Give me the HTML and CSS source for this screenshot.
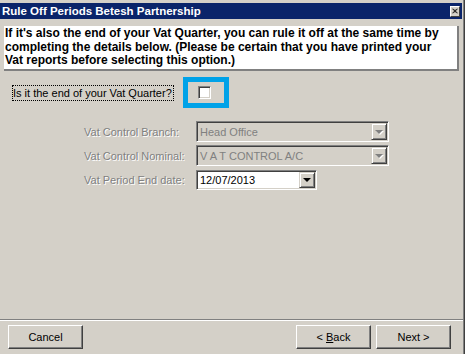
FILE: index.html
```html
<!DOCTYPE html>
<html>
<head>
<meta charset="utf-8">
<title>Rule Off Periods</title>
<link rel="stylesheet" href="styles.css">
</head>
<body>
<div class="window">
  <div class="titlebar">
    <span class="title">Rule Off Periods Betesh Partnership</span>
    <span class="close">
      <svg width="8" height="7" viewBox="0 0 8 7"><path d="M0.5 0.5L6.5 6.5M1.5 0.5L7.5 6.5M6.5 0.5L0.5 6.5M7.5 0.5L1.5 6.5" stroke="#000" stroke-width="1" fill="none"/></svg>
    </span>
  </div>

  <div class="info">If it's also the end of your Vat Quarter, you can rule it off at the same time by<br>completing the details below. (Please be certain that you have printed your<br>Vat reports before selecting this option.)</div>

  <div class="check-row">
    <span class="check-label">Is it the end of your Vat Quarter?</span>
    <span class="highlight"><span class="checkbox"></span></span>
  </div>

  <div class="form">
    <span class="field-label">Vat Control Branch:</span>
    <div class="combo disabled wide"><span class="combo-text">Head Office</span><span class="drop"><span class="arrow"></span></span></div>

    <span class="field-label">Vat Control Nominal:</span>
    <div class="combo disabled wide"><span class="combo-text">V A T CONTROL A/C</span><span class="drop"><span class="arrow"></span></span></div>

    <span class="field-label">Vat Period End date:</span>
    <div class="combo date"><span class="combo-text">12/07/2013</span><span class="drop"><span class="arrow"></span></span></div>
  </div>

  <div class="spacer"></div>
  <div class="separator"></div>

  <div class="buttons">
    <button class="btn">Cancel</button>
    <div class="nav">
      <button class="btn">&lt; <u>B</u>ack</button>
      <button class="btn">Next &gt;</button>
    </div>
  </div>
</div>
</body>
</html>
```

FILE: styles.css
```css
html, body {
  margin: 0;
  padding: 0;
}
body {
  width: 465px;
  height: 354px;
  overflow: hidden;
  background: #d4d0c8;
  font-family: "Liberation Sans", Arial, sans-serif;
  font-size: 11px;
  color: #000;
}
.window {
  box-sizing: border-box;
  width: 465px;
  height: 354px;
  display: flex;
  flex-direction: column;
  border-right: 1px solid #404040;
  box-shadow: inset -1px 0 #808080;
}
.titlebar {
  margin: 3px 2px 0 0;
  height: 16px;
  background: #0a246a;
  color: #fff;
  display: flex;
  align-items: center;
  justify-content: space-between;
}
.title {
  font-weight: bold;
  font-size: 11.5px;
  padding-left: 2px;
}
.close {
  box-sizing: border-box;
  width: 10px;
  height: 11px;
  margin-right: 2px;
  background: #d4d0c8;
  border-top: 1px solid #fff;
  border-left: 1px solid #fff;
  border-right: 1px solid #404040;
  border-bottom: 1px solid #404040;
  display: flex;
  align-items: center;
  justify-content: center;
}
.close svg {
  display: block;
  width: 6px;
  height: 6px;
}
.info {
  margin: 7px 5px 0 4px;
  background: #fff;
  border-right: 2px solid #808080;
  border-bottom: 2px solid #808080;
  padding: 1px 0 1.5px 1px;
  font-weight: bold;
  font-size: 12px;
  line-height: 13.5px;
  white-space: nowrap;
}
.check-row {
  display: flex;
  align-items: center;
  margin-top: 6px;
}
.check-label {
  margin-left: 12px;
  border: 1px dotted #000;
  padding: 0 1px 0 0;
  height: 14px;
  line-height: 14px;
}
.highlight {
  box-sizing: border-box;
  margin-left: 9px;
  width: 46px;
  height: 31px;
  border: 5px solid #00a2e8;
  display: flex;
  align-items: center;
  padding-left: 10px;
}
.checkbox {
  box-sizing: border-box;
  width: 13px;
  height: 13px;
  background: #fff;
  border-top: 1px solid #808080;
  border-left: 1px solid #808080;
  border-right: 1px solid #fff;
  border-bottom: 1px solid #fff;
  box-shadow: inset 1px 1px #404040, inset -1px -1px #d4d0c8;
}
.form {
  display: grid;
  grid-template-columns: 112px auto;
  grid-auto-rows: 21px;
  row-gap: 3px;
  align-items: center;
  margin: 13px 0 0 84px;
}
.field-label {
  color: #808080;
  text-shadow: 1px 1px 0 #fff;
}
.combo {
  box-sizing: border-box;
  height: 21px;
  display: flex;
  align-items: center;
  border-top: 1px solid #808080;
  border-left: 1px solid #808080;
  border-right: 1px solid #fff;
  border-bottom: 1px solid #fff;
  box-shadow: inset 1px 1px #404040, inset -1px -1px #d4d0c8;
  padding: 1px;
}
.combo.wide {
  width: 193px;
}
.combo.date {
  width: 121px;
  height: 20px;
  background: #fff;
}
.combo.disabled {
  background: #d4d0c8;
  color: #808080;
}
.combo-text {
  flex: 1;
  padding-left: 2px;
  white-space: nowrap;
  overflow: hidden;
}
.drop {
  box-sizing: border-box;
  width: 16px;
  height: 100%;
  background: #d4d0c8;
  border-top: 1px solid #d4d0c8;
  border-left: 1px solid #d4d0c8;
  border-right: 1px solid #404040;
  border-bottom: 1px solid #404040;
  box-shadow: inset 1px 1px #fff, inset -1px -1px #808080;
  display: flex;
  align-items: center;
  justify-content: center;
}
.arrow {
  width: 0;
  height: 0;
  border-left: 4px solid transparent;
  border-right: 4px solid transparent;
  border-top: 4px solid #000;
  margin-top: 1px;
}
.disabled .arrow {
  border-top-color: #808080;
  filter: drop-shadow(1px 1px 0 #fff);
}
.spacer {
  flex: 1;
}
.separator {
  height: 1px;
  background: #808080;
  border-bottom: 1px solid #fff;
  margin-right: 1px;
}
.buttons {
  display: flex;
  justify-content: space-between;
  margin: 4px 13px 5px 8px;
}
.nav {
  display: flex;
  gap: 5px;
}
.btn {
  box-sizing: border-box;
  width: 75px;
  height: 24px;
  padding: 0;
  background: #d4d0c8;
  font-family: "Liberation Sans", Arial, sans-serif;
  font-size: 11px;
  color: #000;
  border-top: 1px solid #fff;
  border-left: 1px solid #fff;
  border-right: 1px solid #404040;
  border-bottom: 1px solid #404040;
  box-shadow: inset -1px -1px #808080;
  border-radius: 0;
}
```
